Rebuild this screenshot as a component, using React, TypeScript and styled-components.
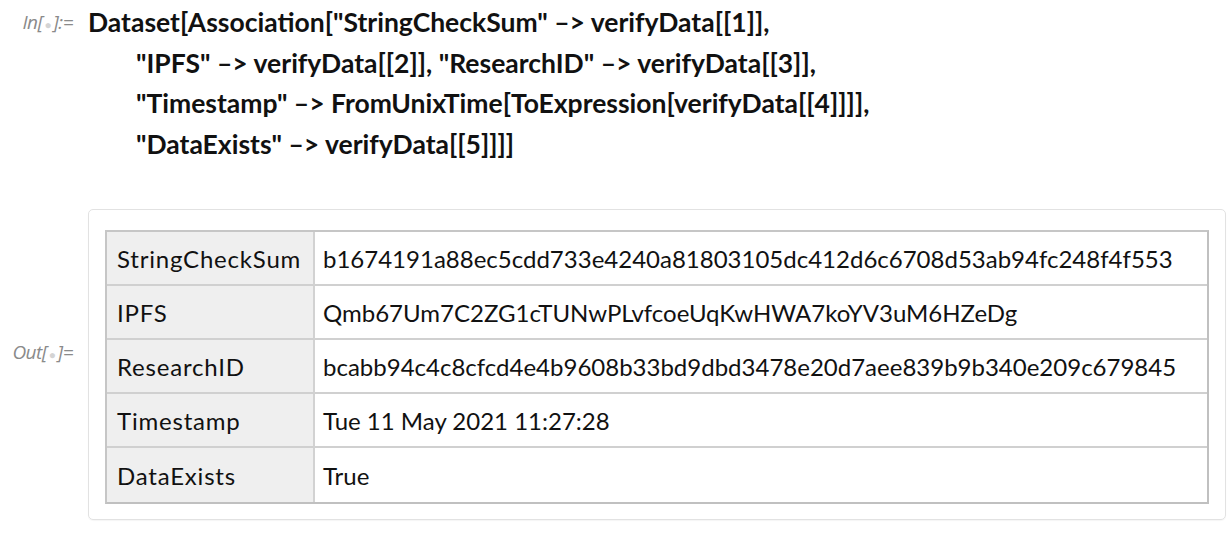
import React from "react";
import styled, { createGlobalStyle } from "styled-components";

const GlobalStyle = createGlobalStyle`
  html, body {
    margin: 0;
    padding: 0;
    background: #ffffff;
  }
  body {
    font-family: Lato, "Noto Sans", sans-serif;
    color: #111;
  }
`;

const Notebook = styled.div`
  display: flex;
  flex-direction: column;
  width: 1230px;
  height: 556px;
  padding-top: 2px;
  box-sizing: border-box;
`;

const Cell = styled.div<{ center?: boolean }>`
  display: flex;
  align-items: ${({ center }) => (center ? "center" : "flex-start")};
`;

const CellLabel = styled.div<{ lift?: number }>`
  width: 73px;
  flex-shrink: 0;
  text-align: right;
  margin-right: 15px;
  font-family: "Open Sans", "Noto Sans", sans-serif;
  font-style: italic;
  font-size: 19px;
  letter-spacing: -0.5px;
  color: #8a8a8a;
  line-height: 40px;
  margin-bottom: ${({ lift }) => lift ?? 0}px;
  white-space: nowrap;
`;

const Dot = styled.span`
  color: #d4d4d4;
  font-style: normal;
  font-size: 12px;
  margin: 0 2px;
`;

const Code = styled.div`
  font-family: Lato, "Noto Sans", sans-serif;
  font-weight: 700;
  font-size: 26.5px;
  line-height: 40.5px;
  color: #111;
  white-space: pre;
`;

const CodeLine = styled.div<{ indent?: boolean }>`
  padding-left: ${({ indent }) => (indent ? 48 : 0)}px;
`;

const OutputCell = styled(Cell)`
  margin-top: 45px;
`;

const OutBox = styled.div`
  width: 1138px;
  box-sizing: border-box;
  padding: 20px 16px 15px 16px;
  border: 1px solid #e2e2e2;
  border-radius: 5px;
  box-shadow: 0 1px 1px rgba(0, 0, 0, 0.04);
`;

const Table = styled.div`
  display: grid;
  grid-template-columns: 208px 1fr;
  border-top: 2px solid #c6c6c6;
  border-left: 2px solid #c6c6c6;
  border-right: 2px solid #c0c0c0;
  border-bottom: 2px solid #c0c0c0;
`;

const Td = styled.div<{ head?: boolean; last?: boolean }>`
  height: 54px;
  box-sizing: border-box;
  display: flex;
  align-items: center;
  padding-left: ${({ head }) => (head ? 10 : 8)}px;
  background: ${({ head }) => (head ? "#efefef" : "#ffffff")};
  border-right: ${({ head }) => (head ? "2px solid #d2d2d2" : "none")};
  border-bottom: ${({ last }) => (last ? "none" : "2px solid #d0d0d0")};
  font-family: Lato, "Noto Sans", sans-serif;
  font-size: 24px;
  letter-spacing: ${({ head }) => (head ? "0.8px" : "0")};
  color: #111;
  white-space: nowrap;
`;

const rows: [string, string][] = [
  ["StringCheckSum", "b1674191a88ec5cdd733e4240a81803105dc412d6c6708d53ab94fc248f4f553"],
  ["IPFS", "Qmb67Um7C2ZG1cTUNwPLvfcoeUqKwHWA7koYV3uM6HZeDg"],
  ["ResearchID", "bcabb94c4c8cfcd4e4b9608b33bd9dbd3478e20d7aee839b9b340e209c679845"],
  ["Timestamp", "Tue 11 May 2021 11:27:28"],
  ["DataExists", "True"],
];

export default function App() {
  return (
    <>
      <GlobalStyle />
      <Notebook>
        <Cell>
          <CellLabel>
            In[<Dot>●</Dot>]:=
          </CellLabel>
          <Code>
            <CodeLine>{'Dataset[Association["StringCheckSum" –> verifyData[[1]],'}</CodeLine>
            <CodeLine indent>{'"IPFS" –> verifyData[[2]], "ResearchID" –> verifyData[[3]],'}</CodeLine>
            <CodeLine indent>{'"Timestamp" –> FromUnixTime[ToExpression[verifyData[[4]]]],'}</CodeLine>
            <CodeLine indent>{'"DataExists" –> verifyData[[5]]]]'}</CodeLine>
          </Code>
        </Cell>
        <OutputCell center>
          <CellLabel lift={22}>
            Out[<Dot>●</Dot>]=
          </CellLabel>
          <OutBox>
            <Table>
              {rows.map(([k, v], i) => (
                <React.Fragment key={k}>
                  <Td head last={i === rows.length - 1}>{k}</Td>
                  <Td last={i === rows.length - 1}>{v}</Td>
                </React.Fragment>
              ))}
            </Table>
          </OutBox>
        </OutputCell>
      </Notebook>
    </>
  );
}
